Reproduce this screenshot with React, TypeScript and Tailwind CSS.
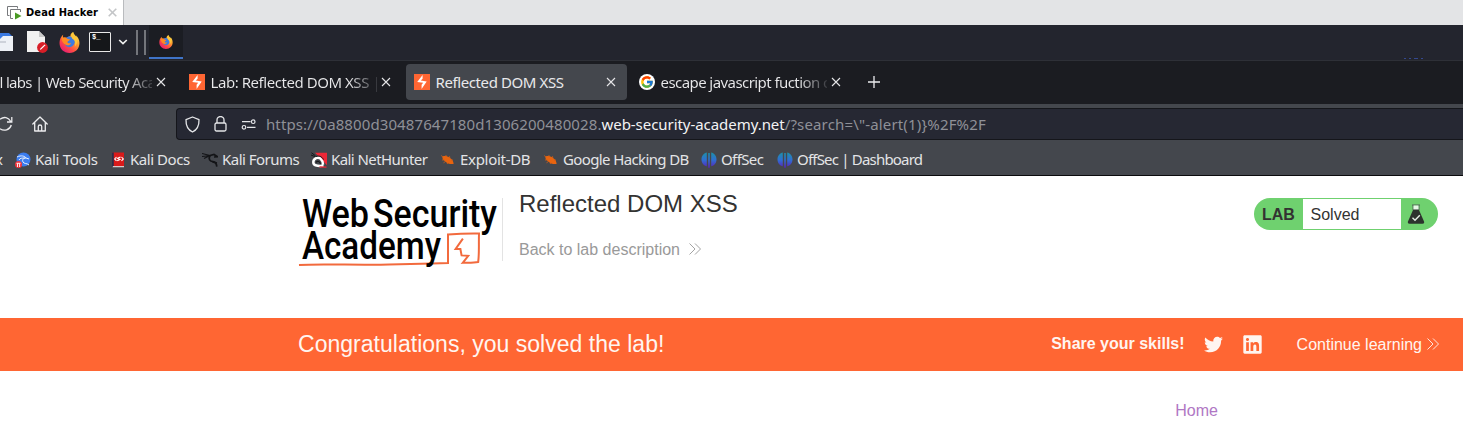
import React from "react";
import clsx from "clsx";
import { FaTwitter, FaLinkedin } from "react-icons/fa";
import { FcGoogle } from "react-icons/fc";

function Firefox({ size, id }: { size: number; id: string }) {
  return (
    <svg width={size} height={size} viewBox="0 0 40 40" className="shrink-0">
      <defs>
        <linearGradient id={id} x1="0.85" y1="0.1" x2="0.2" y2="0.9">
          <stop offset="0" stopColor="#ffe14a" />
          <stop offset="0.35" stopColor="#ff9a2e" />
          <stop offset="0.7" stopColor="#ff4a45" />
          <stop offset="1" stopColor="#e8226f" />
        </linearGradient>
      </defs>
      <path
        d="M8 5c-1 2-1 4 0 6 2-1 5-1 7 0 2-2 4-3 7-3-1-2 1-6 5-8 0 4 3 5 6 9 0-1 0-2-.6-3 4 4 6.600 9 6.600 15 0 11-8 19-19 19S1 32 1 21c0-6 2-12 7-16z"
        fill={`url(#${id})`}
      />
      <path d="M13 12c2-3 6-4 10-3 5 1 8 6 7 11s-5 9-10 9-9-4-9-8c0-3 0-5 2-9z" fill="#3f7be0" />
      <path d="M8 5c-1 2-1 4 0 6 2-1 5-1 7 1 1 1 3 2 6 2-1 3-4 3-5 5 1 3 4 3 7 2-1 4-7 6-11 3-4-2-7-7-7-11 0-3 1-6 3-8z" fill="#ff8a22" />
      <path d="M27 0c0 4 3 5 6 10 4 7 1 14-3 18 2-6 1-11-3-14-4-3-5-9 0-14z" fill="#ffc83a" />
    </svg>
  );
}

function Burp() {
  return (
    <svg width="16" height="16" viewBox="0 0 16 16" className="shrink-0">
      <rect width="16" height="16" fill="#ff6633" />
      <path d="M8.600 1v3.800L6.700 6.600l6 .9L7.600 15v-4.200l1.600-2L3.200 7.900z" fill="#fff" />
    </svg>
  );
}

function Cross() {
  return (
    <svg width="10" height="10" viewBox="0 0 10 10" className="shrink-0">
      <path d="M1 1l8 8M9 1L1 9" stroke="#e6e6e8" strokeWidth="1.100" />
    </svg>
  );
}

function BookmarkIcon({ kind }: { kind: string }) {
  return (
    <svg width="16" height="16" viewBox="0 0 16 16" className="shrink-0">
      {kind === "tools" && (
        <>
          <circle cx="8.500" cy="7.500" r="7" fill="#3b7df0" />
          <path d="M2 5c4-2 8-1 9 1-3 0-4 2-3 4s4 1 6 3M4 8c1-2 3-2 6-2M11 6l3 1" fill="none" stroke="#e9f1ff" strokeWidth="1" />
          <circle cx="3.500" cy="12.500" r="3.500" fill="#f0343c" />
          <path d="M1.500 11.300h4M2.500 11.500V15M4.600 11.500V15" stroke="#fff" strokeWidth=".9" />
        </>
      )}
      {kind === "docs" && (
        <>
          <path d="M2 .5h12v13.500H2z" fill="#d91a1a" />
          <path d="M2 .5h1.800V14L2 15z" fill="#2c2e4a" />
          <path d="M3 14h11v1.300H2.500z" fill="#d9c9cb" />
          <path d="M6.500 5 4.700 7l1.800 1.800M11.500 5l1.800 2-1.800 1.800M10.500 5 7.500 6.200l2.500 1.300-2.800 1.300" fill="none" stroke="#fff" strokeWidth="1.100" />
        </>
      )}
      {kind === "forums" && (
        <g fill="none" stroke="#131417">
          <path d="M0 4.500 9 3.500M0 1.500l8 2M2 6.500l6-3" strokeWidth="1.200" />
          <path d="M8 3.500c-2 3.500 0 6 3 6.200 2.500.2 3.500 1.800 3.800 5" strokeWidth="1.700" />
          <path d="M8 3.500l4-1 3.500 2.300-3.500.2M10.500 10l4.500 1" strokeWidth="1.700" />
        </g>
      )}
      {kind === "nethunter" && (
        <>
          <path d="M4 .8h12v12.500z" fill="#ee2737" />
          <path d="M.5.8l4 3M0 3l5 2" stroke="#17181b" />
          <path d="M12 12.500C11.500 7 8 4.500 5 6.200 1.500 8 1.500 12 4.500 13.300c3 1 6 .5 8 .5" fill="none" stroke="#fff" strokeWidth="2.500" />
          <path d="M12.500 7.500C10.500 4 7.500 3.600 5 4.600" fill="none" stroke="#17181b" strokeWidth="1" />
          <path d="M5 10.500c1.500-2 4-1 4.500 1.300" fill="none" stroke="#17181b" strokeWidth="1.100" />
          <path d="M8.500 14.800 15.500 15.200" stroke="#ee2737" strokeWidth="1.200" />
        </>
      )}
      {kind === "bug" && (
        <>
          <path d="M2.500 4.500C5 3.500 8.500 4 11 6.800c1.800 1.400 2.500 3.200 2.600 5.200-3 .3-6.600-.2-8.600-2.700C3 8 2 6.200 2.500 4.500z" fill="#e8640f" />
          <path d="M1.200 3.500l2 1.800M5.800 3 6.500 5M9.500 4.200l.3 1.800M2 8l2.500-.3M3.500 10.800l2.200-1.500M13 8l-2 .5M7 12l1.200-1.500" stroke="#d85f14" strokeWidth=".8" />
        </>
      )}
      {kind === "offsec" && (
        <>
          <defs>
            <linearGradient id="offsec-fill" x1="0" y1="0" x2="0" y2="16" gradientUnits="userSpaceOnUse">
              <stop offset="0" stopColor="#1b93a5" />
              <stop offset="0.5" stopColor="#2f6fd2" />
              <stop offset="1" stopColor="#5b1fb8" />
            </linearGradient>
          </defs>
          <path d="M5.800.6v13.600C3 13.800.5 11.200.5 7.500S3 1 5.800.6zM10.200.6v13.600c2.800-.4 5.300-3 5.300-6.700S13 1 10.200.6zM7.200 1h1.600v14.800H7.200z" fill="url(#offsec-fill)" />
        </>
      )}
    </svg>
  );
}

const tabs = [
  { title: "All labs | Web Security Aca", icon: "burp", active: false, track: "tracking-[-0.7px] pl-[2px]" },
  { title: "Lab: Reflected DOM XSS |", icon: "burp", active: false, track: "tracking-[-0.45px]" },
  { title: "Reflected DOM XSS", icon: "burp", active: true, track: "tracking-[-0.4px]" },
  { title: "escape javascript fuction o", icon: "google", active: false, track: "tracking-[-0.57px]" },
];

const bookmarks = [
  { label: "Kali Tools", kind: "tools", box: "w-[95px] tracking-[-0.32px]" },
  { label: "Kali Docs", kind: "docs", box: "w-[92px] tracking-[-0.45px]" },
  { label: "Kali Forums", kind: "forums", box: "w-[109px] tracking-[-0.52px]" },
  { label: "Kali NetHunter", kind: "nethunter", box: "w-[129px] tracking-[-0.57px]" },
  { label: "Exploit-DB", kind: "bug", box: "w-[103px] tracking-[-0.3px]" },
  { label: "Google Hacking DB", kind: "bug", box: "w-[158px] tracking-[-0.62px]" },
  { label: "OffSec", kind: "offsec", box: "w-[76px] tracking-[-0.6px]" },
  { label: "OffSec | Dashboard", kind: "offsec", box: "w-[160px] tracking-[-0.8px]" },
];

function Chevrons({ className }: { className: string }) {
  return (
    <svg width="12" height="12" viewBox="0 0 12 12" fill="none" className={className}>
      <path d="M.5.5 6 6 .5 11.500M6 .5 11.500 6 6 11.500" stroke="currentColor" strokeWidth=".9" />
    </svg>
  );
}

function VmTabs() {
  return (
    <div className="flex h-[25px] bg-[#e3e4e6]">
      <div className="flex w-[124px] items-center border-r border-[#b9bbbe] bg-white pl-[7px] font-['DejaVu_Sans_Condensed','DejaVu_Sans',sans-serif] text-[11px] font-bold text-black">
        <svg width="15" height="14" viewBox="0 0 15 14" className="shrink-0" fill="none">
          <path d="M2.500 9.500h-2v-9h10v2" stroke="#77797c" />
          <path d="M6 12.500H3.500v-9h10V6" stroke="#77797c" />
          <path d="M8 6.500v7l6.500-3.500z" fill="#4a9a25" />
        </svg>
        <span className="ml-[4px] w-[82px] pt-px tracking-[0.1px] whitespace-nowrap font-stretch-condensed">Dead Hacker</span>
        <svg width="9" height="9" viewBox="0 0 9 9" className="shrink-0">
          <path d="M.7.7l7.600 7.600M8.300.7.7 8.300" stroke="#c3c5c7" strokeWidth="1.600" />
        </svg>
      </div>
    </div>
  );
}

function DesktopPanel() {
  return (
    <div className="flex h-[35px] items-stretch justify-between bg-[#23252e]">
      <div className="flex items-center pb-px">
        <svg width="13" height="20" viewBox="0 0 13 20" className="shrink-0">
          <path d="M0 1h9l3 3v4H0z" fill="#3a78e0" />
          <path d="M0 7 3 4h10v15H0z" fill="#edf0f6" />
          <path d="M0 9h6v2H0z" fill="#cdd1da" />
        </svg>
        <svg width="21" height="22" viewBox="0 0 21 22" className="ml-[14px] shrink-0">
          <path d="M0 0h12l6 6v15H0z" fill="#f1f1f1" />
          <path d="M12 0v6h6z" fill="#c9c9c9" />
          <circle cx="15.500" cy="16.500" r="5.400" fill="#d81e27" />
          <path d="M12.800 19l.6-1.600 4.200-4 .9.900-4.200 4z" fill="#fff" />
        </svg>
        <div className="ml-[11px] flex"><Firefox size={21} id="flame-launcher" /></div>
        <div className="ml-[9px] h-[20px] w-[22px] rounded-[1px] border border-[#e8e8e8] bg-[#15171a] pl-[2px] font-['Liberation_Mono',monospace] text-[7px] leading-[9px] font-bold text-white">$_</div>
        <svg width="10" height="6" viewBox="0 0 10 6" className="ml-[7px] shrink-0">
          <path d="M1.200 1 5 4.600 8.800 1" fill="none" stroke="#f0f0f0" strokeWidth="1.700" />
        </svg>
        <div className="ml-[8px] h-[25px] w-[10px] border-x-2 border-[#73757b]" />
        <div className="ml-[3px] flex h-[34px] w-[34px] items-center justify-center self-start border-b-2 border-[#3f74c8] bg-[#1b1d23] pt-px">
          <Firefox size={14} id="flame-task" />
        </div>
      </div>
      <div className="mr-[40px] flex items-end gap-[3px] pb-px">
        <div className="h-px w-[2px] bg-[#34488f]" />
        <div className="h-px w-[2px] bg-[#34488f]" />
        <div className="h-px w-[4px] bg-[#34488f]" />
        <div className="h-px w-[2px] bg-[#34488f]" />
      </div>
    </div>
  );
}

function TabStrip() {
  return (
    <div className="flex h-[44px] items-center overflow-hidden border-t border-[#2e3037] bg-[#1b1c21] pb-px text-[15px] text-[#e9e9eb]">
      <div className="ml-[-44px] flex gap-[4px]">
        {tabs.map((tab) => (
          <div
            key={tab.title}
            className={clsx("flex h-[36px] w-[221px] shrink-0 items-center rounded-[4px] pl-[8px]", tab.active && "bg-[#44474d]")}
          >
            {tab.icon === "burp" ? (
              <Burp />
            ) : (
              <span className="flex size-[16px] shrink-0 items-center justify-center rounded-full bg-white"><FcGoogle size={14} /></span>
            )}
            <span
              className={clsx(
                "ml-[5.500px] w-[166.500px] shrink-0 overflow-hidden whitespace-nowrap",
                tab.track,
                !tab.active && "mask-r-from-[28px] mask-r-to-[0px] mask-linear-[unset]"
              )}
            >
              <span className={clsx(!tab.active && "bg-linear-to-r from-[#e9e9eb] from-[138px] to-[#1b1c21] to-[172px] bg-clip-text text-transparent")}>{tab.title}</span>
            </span>
            <span className="ml-[4px] flex"><Cross /></span>
          </div>
        ))}
      </div>
      <svg width="12" height="12" viewBox="0 0 12 12" className="ml-[15.500px] shrink-0">
        <path d="M6 0v12M0 6h12" stroke="#ececee" strokeWidth="1.300" />
      </svg>
    </div>
  );
}

function NavBar() {
  return (
    <div className="flex h-[40px] items-center bg-[#44474d]">
      <svg width="14" height="16" viewBox="0 0 14 16" fill="none" stroke="#ececee" strokeWidth="1.300" className="shrink-0">
        <path d="M0 3.200C4 .2 8.500 1.400 10.800 5.500M11.800 1v5H7M11.300 9C10 14 4 15.500 0 12.800" />
      </svg>
      <svg width="16" height="16" viewBox="0 0 16 16" fill="none" stroke="#ececee" strokeWidth="1.300" strokeLinejoin="round" strokeLinecap="round" className="ml-[18px] shrink-0">
        <path d="M.8 8 8 1l7.200 7M2.700 6.500V15h10.600V6.500M6.300 15V10.500c0-1 .7-1.500 1.700-1.500s1.700.5 1.700 1.500V15" />
      </svg>
      <div className="ml-[128px] flex h-[32px] flex-1 items-center rounded-l-[4px] border border-r-0 border-[#15161b] bg-[#262833] pl-[7.500px]">
        <svg width="15" height="17" viewBox="0 0 15 17" fill="none" stroke="#e4e5e8" strokeWidth="1.300" strokeLinejoin="round" className="shrink-0">
          <path d="M7.500 1 14 3.600C14.200 9.500 12 14 7.500 16 3 14 .8 9.500 1 3.600z" />
        </svg>
        <svg width="13" height="16" viewBox="0 0 13 16" fill="none" stroke="#e4e5e8" strokeWidth="1.300" className="ml-[14px] shrink-0">
          <rect x="1" y="7" width="11" height="8" rx="1.500" />
          <path d="M3 7V4a3.500 3.500 0 0 1 7 0v3" />
        </svg>
        <svg width="15" height="11" viewBox="0 0 15 11" fill="none" stroke="#e4e5e8" strokeWidth="1.200" className="ml-[14px] shrink-0">
          <path d="M1 2.700h8.500M6 8.300h8.500" />
          <circle cx="12.200" cy="2.700" r="1.800" />
          <circle cx="3" cy="8.300" r="1.800" />
        </svg>
        <div className="ml-[10.500px] flex whitespace-nowrap text-[15px] text-[#8f9097]">
          <span className="tracking-[0.1px]">https://0a8800d30487647180d1306200480028.</span>
          <span className="tracking-[-0.05px] text-[#f3f3f4]">web-security-academy.net</span>
          <span className="tracking-[0.16px]">/?search=\"-alert(1)&#125;%2F%2F</span>
        </div>
      </div>
    </div>
  );
}

function Bookmarks() {
  return (
    <div className="flex h-[32px] items-center overflow-hidden border-b border-[#0b0b0d] bg-[#44474d] text-[15px] text-[#e3e4e6]">
      <div className="flex w-[15px] shrink-0 justify-start"><span className="ml-[-5px]">x</span></div>
      {bookmarks.map((b, i) => (
        <div key={i} className={clsx("flex shrink-0 items-center gap-[4px] whitespace-nowrap", b.box)}>
          <BookmarkIcon kind={b.kind} />
          <span>{b.label}</span>
        </div>
      ))}
    </div>
  );
}

function Logo() {
  return (
    <svg width="204" height="76" viewBox="298 196 204 76" className="shrink-0">
      <g className="font-['Roboto',sans-serif] text-[38px] font-medium" fill="#000">
        <text x="302" y="227" textLength="67" lengthAdjust="spacingAndGlyphs">Web</text>
        <text x="373" y="227" textLength="124" lengthAdjust="spacingAndGlyphs">Security</text>
      </g>
      <path d="M299 265c20-1.400 60 .4 90-.4s40-1.200 59-1.600V234.500c10-.8 20-1.200 31-1-.4 10 .4 19-.8 28.500-5 1-10 .6-15.500.8l5.500-7-6.600-.4-1.200-6.400h-4.800l7.300-10.400" fill="none" stroke="#f26a3d" strokeWidth="2" />
      <text x="302" y="259" textLength="139" lengthAdjust="spacingAndGlyphs" className="font-['Roboto',sans-serif] text-[38px] font-medium">Academy</text>
    </svg>
  );
}

function LabHeader() {
  return (
    <header className="flex h-[142px] items-start pr-[25px] pl-[298px]">
      <div className="pt-[20px]"><Logo /></div>
      <div className="mt-[22px] h-[63px] border-l border-[#e3e3e3]" />
      <div className="ml-[16px] flex flex-1 flex-col pt-[10px]">
        <h2 className="text-[24px] leading-[36px] text-[#333332]">Reflected DOM XSS</h2>
        <a className="mt-[16px] flex items-center text-[16px] leading-[24px] text-[#999999]">
          Back to lab description
          <Chevrons className="mb-[2px] ml-[9px]" />
        </a>
      </div>
      <div className="mt-[22px] flex h-[32px] w-[184px] items-center rounded-full bg-[#6fd16f] text-[16px] text-[#333332]">
        <span className="w-[49px] pt-[2px] pl-[8px] font-bold">LAB</span>
        <span className="flex h-[30px] w-[98px] items-center bg-white pt-px pl-[7.500px]">Solved</span>
        <svg width="18" height="20" viewBox="0 0 18 20" className="ml-[6px] shrink-0">
          <path d="M5 1h8M6 1v5M12 1v5" stroke="#55655a" strokeWidth="1" />
          <path d="M6.500 1.500h5V6h-5z" fill="#e7f6e7" />
          <path d="M6.200 5.500h5.600L17 17.500c.5 1.300-.2 2.300-1.500 2.300h-13c-1.300 0-2-1-1.500-2.300z" fill="#2c332d" />
          <path d="M5.500 13.700 8 16.200l4.800-5" fill="none" stroke="#e5efe5" strokeWidth="1.400" />
        </svg>
      </div>
    </header>
  );
}

export default function App() {
  return (
    <div className="h-[439px] w-[1463px] overflow-hidden bg-white font-['Liberation_Sans',sans-serif]">
      <VmTabs />
      <div className="font-['Noto_Sans',sans-serif]">
        <DesktopPanel />
        <TabStrip />
        <NavBar />
        <Bookmarks />
      </div>
      <main>
        <LabHeader />
        <section className="flex h-[53px] items-center bg-[#ff6633] pr-[24px] pb-[2px] pl-[298px] text-[#fff5f0]">
          <h4 className="flex-1 text-[23px] leading-[30px] tracking-[0.02px]">Congratulations, you solved the lab!</h4>
          <span className="text-[16px] font-bold">Share your skills!</span>
          <FaTwitter size={19} className="mt-px ml-[19px]" />
          <FaLinkedin size={21} className="mt-[2px] ml-[19px]" />
          <a className="ml-[34px] flex items-center pt-[2px] text-[16px]">
            Continue learning
            <Chevrons className="mb-px ml-[5px]" />
          </a>
        </section>
        <nav className="flex justify-end pt-[28px] pr-[245px] text-[16px] leading-[24px] text-[#b077c4]">Home</nav>
      </main>
    </div>
  );
}
